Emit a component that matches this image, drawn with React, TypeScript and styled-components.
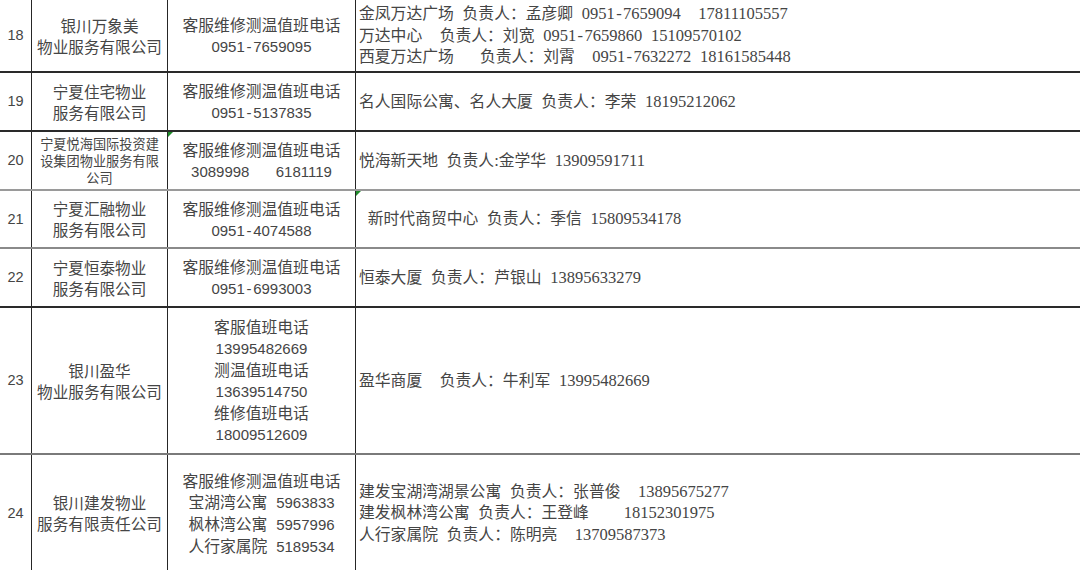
import React from 'react';
import styled, { createGlobalStyle } from 'styled-components';

const GlobalStyle = createGlobalStyle`
  html, body {
    margin: 0;
    padding: 0;
    background: #fff;
  }
  body {
    width: 1080px;
    height: 570px;
    overflow: hidden;
  }
`;

const Sheet = styled.div`
  width: 1080px;
  height: 570px;
  overflow: hidden;
  display: flex;
  flex-direction: column;
  background: #fff;
  color: #454545;
  font-family: "Noto Sans CJK SC", sans-serif;
  font-size: 15.8px;
`;

interface RowProps {
  $height: number;
  $line: string;
}

const Row = styled.div<RowProps>`
  display: grid;
  grid-template-columns: 32px 136px 188px 1fr;
  flex: 0 0 ${(p) => p.$height}px;
  box-sizing: border-box;
  border-bottom: 2px solid ${(p) => p.$line};
`;

interface CellProps {
  $flag?: boolean;
}

const Cell = styled.div<CellProps>`
  position: relative;
  display: flex;
  flex-direction: column;
  justify-content: center;
  align-items: center;
  border-right: 1px solid #262626;
  line-height: 21px;
  white-space: pre;
  &::before {
    content: '';
    display: ${(p) => (p.$flag ? 'block' : 'none')};
    position: absolute;
    top: 0;
    left: 0;
    border-top: 5px solid #1f8c2a;
    border-right: 5px solid transparent;
  }
`;

const IndexCell = styled(Cell)`
  font-family: "Liberation Sans", sans-serif;
  font-size: 14.5px;
`;

const CompanyCell = styled(Cell)<{ $small?: boolean }>`
  font-size: ${(p) => (p.$small ? '13.2px' : '15.6px')};
  line-height: ${(p) => (p.$small ? '17px' : '21px')};
`;

const DetailCell = styled(Cell)`
  align-items: flex-start;
  padding-left: 3px;
  line-height: 20.5px;
  border-right: none;
`;

const Line = styled.div`
  white-space: pre;
`;

const Latin = styled.span<{ $serif?: boolean }>`
  font-family: ${(p) => (p.$serif ? '"Liberation Serif", serif' : '"Liberation Sans", sans-serif')};
  font-size: ${(p) => (p.$serif ? '16.5px' : '15px')};
  word-spacing: 4.6px;
`;

// the sheet's hyphen is as wide as a digit
const Dash = styled.span<{ $serif?: boolean }>`
  display: inline-block;
  width: ${(p) => (p.$serif ? '0.5em' : '0.556em')};
  text-align: center;
`;

const Text = ({ value, serif }: { value: string; serif?: boolean }) => (
  <Line>
    {value.split(/([\x20-\x7e]+)/).map((part, i) =>
      i % 2 ? (
        <Latin key={i} $serif={serif}>
          {part.split('-').map((seg, j) =>
            j === 0 ? (
              seg
            ) : (
              <React.Fragment key={j}>
                <Dash $serif={serif}>-</Dash>
                {seg}
              </React.Fragment>
            )
          )}
        </Latin>
      ) : (
        part
      )
    )}
  </Line>
);

interface Entry {
  no: string;
  height: number;
  line: string;
  company: string[];
  small?: boolean;
  phone: string[];
  phoneFlag?: boolean;
  detail: string[];
  detailFlag?: boolean;
}

const rows: Entry[] = [
  {
    no: '18',
    height: 73,
    line: '#2a2a2a',
    company: ['银川万象美', '物业服务有限公司'],
    phone: ['客服维修测温值班电话', '0951-7659095'],
    detail: [
      '金凤万达广场 负责人：孟彦卿 0951-7659094  17811105557',
      '万达中心  负责人：刘宽 0951-7659860 15109570102',
      '西夏万达广场   负责人：刘霄  0951-7632272 18161585448',
    ],
  },
  {
    no: '19',
    height: 59,
    line: '#2a2a2a',
    company: ['宁夏住宅物业', '服务有限公司'],
    phone: ['客服维修测温值班电话', '0951-5137835'],
    detail: ['名人国际公寓、名人大厦 负责人：李荣 18195212062'],
  },
  {
    no: '20',
    height: 59,
    line: '#9a9a9a',
    company: ['宁夏悦海国际投资建', '设集团物业服务有限', '公司'],
    small: true,
    phone: ['客服维修测温值班电话', '3089998   6181119'],
    phoneFlag: true,
    detail: ['悦海新天地 负责人:金学华 13909591711'],
  },
  {
    no: '21',
    height: 58,
    line: '#8a8a8a',
    company: ['宁夏汇融物业', '服务有限公司'],
    phone: ['客服维修测温值班电话', '0951-4074588'],
    detail: [' 新时代商贸中心 负责人：季信 15809534178'],
    detailFlag: true,
  },
  {
    no: '22',
    height: 59,
    line: '#2a2a2a',
    company: ['宁夏恒泰物业', '服务有限公司'],
    phone: ['客服维修测温值班电话', '0951-6993003'],
    detail: ['恒泰大厦 负责人：芦银山 13895633279'],
  },
  {
    no: '23',
    height: 147,
    line: '#7a7a7a',
    company: ['银川盈华', '物业服务有限公司'],
    phone: ['客服值班电话', '13995482669', '测温值班电话', '13639514750', '维修值班电话', '18009512609'],
    detail: ['盈华商厦  负责人：牛利军 13995482669'],
  },
  {
    no: '24',
    height: 118,
    line: '#2a2a2a',
    company: ['银川建发物业', '服务有限责任公司'],
    phone: ['客服维修测温值班电话', '宝湖湾公寓 5963833', '枫林湾公寓 5957996', '人行家属院 5189534'],
    detail: [
      '建发宝湖湾湖景公寓 负责人：张普俊  13895675277',
      '建发枫林湾公寓 负责人：王登峰    18152301975',
      '人行家属院 负责人：陈明亮  13709587373',
    ],
  },
];

const App = () => (
  <>
    <GlobalStyle />
    <Sheet>
      {rows.map((row) => (
        <Row key={row.no} $height={row.height} $line={row.line}>
          <IndexCell>{row.no}</IndexCell>
          <CompanyCell $small={row.small}>
            {row.company.map((t) => (
              <Line key={t}>{t}</Line>
            ))}
          </CompanyCell>
          <Cell $flag={row.phoneFlag}>
            {row.phone.map((t) => (
              <Text key={t} value={t} />
            ))}
          </Cell>
          <DetailCell $flag={row.detailFlag}>
            {row.detail.map((t) => (
              <Text key={t} value={t} serif />
            ))}
          </DetailCell>
        </Row>
      ))}
    </Sheet>
  </>
);

export default App;
